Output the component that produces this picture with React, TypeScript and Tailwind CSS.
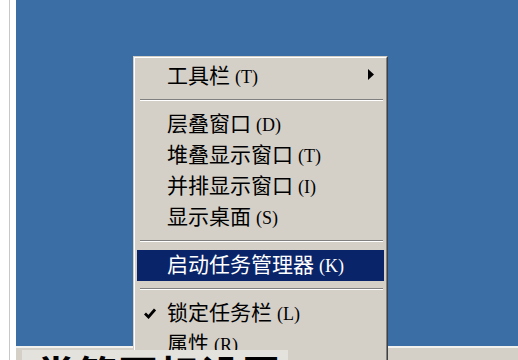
import React from "react";

const cjk = { fontFamily: '"Liberation Serif", "Noto Sans CJK SC", serif' };

function Item({
  label,
  hint,
  highlight,
  checked,
  arrow,
}: {
  label: string;
  hint: string;
  highlight?: boolean;
  checked?: boolean;
  arrow?: boolean;
}) {
  return (
    <div
      className={`relative flex h-[31px] items-center pl-[30px] ${
        highlight ? "bg-[#0a246a] text-white" : "text-black"
      }`}
    >
      {checked && (
        <svg
          className="absolute left-[7px] top-[10px]"
          width="12"
          height="11"
          viewBox="0 0 12 11"
        >
          <path d="M1 5.5 L4.5 9 L11 1.5" fill="none" stroke="currentColor" strokeWidth="2.8" />
        </svg>
      )}
      <span className="text-[21px] leading-none">{label}</span>
      <span className="ml-[5px] text-[18px] leading-none">{hint}</span>
      {arrow && (
        <svg
          className="absolute right-[10px] top-[8px]"
          width="6"
          height="11"
          viewBox="0 0 6 11"
        >
          <path d="M0 0 L6 5.5 L0 11 Z" fill="currentColor" />
        </svg>
      )}
    </div>
  );
}

function Sep() {
  return (
    <div className="h-[17px] pt-[7px] pl-[3px] pr-[1px]">
      <div className="h-[2px] border-t border-b border-t-[#808080] border-b-white" />
    </div>
  );
}

export default function App() {
  return (
    <div className="relative flex h-[360px] w-[518px] overflow-hidden bg-white" style={cjk}>
      <div className="w-[9px]" />
      <div className="w-px bg-[#c8c8c8]" />
      <div className="w-[6px]" />
      <div className="flex flex-1 flex-col">
        <div className="h-[346px] bg-[#3a6ea5]" />
        <div className="h-[2px] bg-[#f2f1ee]" />
        <div className="flex-1 bg-[#d4d0c8]" />
      </div>

      {/* context menu */}
      <div className="absolute left-[133px] top-[56px] w-[255px] border border-t-[#d4d0c8] border-l-[#d4d0c8] border-r-[#404040] border-b-[#404040]">
        <div className="border border-t-white border-l-white border-r-[#808080] border-b-[#808080] bg-[#d4d0c8] px-[2px] pt-[3px] pb-[3px]">
          <Item label="工具栏" hint="(T)" arrow />
          <Sep />
          <Item label="层叠窗口" hint="(D)" />
          <Item label="堆叠显示窗口" hint="(T)" />
          <Item label="并排显示窗口" hint="(I)" />
          <Item label="显示桌面" hint="(S)" />
          <Sep />
          <Item label="启动任务管理器" hint="(K)" highlight />
          <Sep />
          <Item label="锁定任务栏" hint="(L)" checked />
          <Item label="属性" hint="(R)" />
        </div>
      </div>

      {/* caption overlay */}
      <div className="absolute left-[22px] top-[350px] h-[40px] w-[266px] bg-[#e4e2dd] pl-[14px] pt-[3px]">
        <div
          className="text-[40px] font-bold leading-none tracking-[1px] text-black"
          style={{ fontFamily: '"Noto Sans CJK SC", sans-serif' }}
        >
          常简图标设置
        </div>
      </div>
    </div>
  );
}
